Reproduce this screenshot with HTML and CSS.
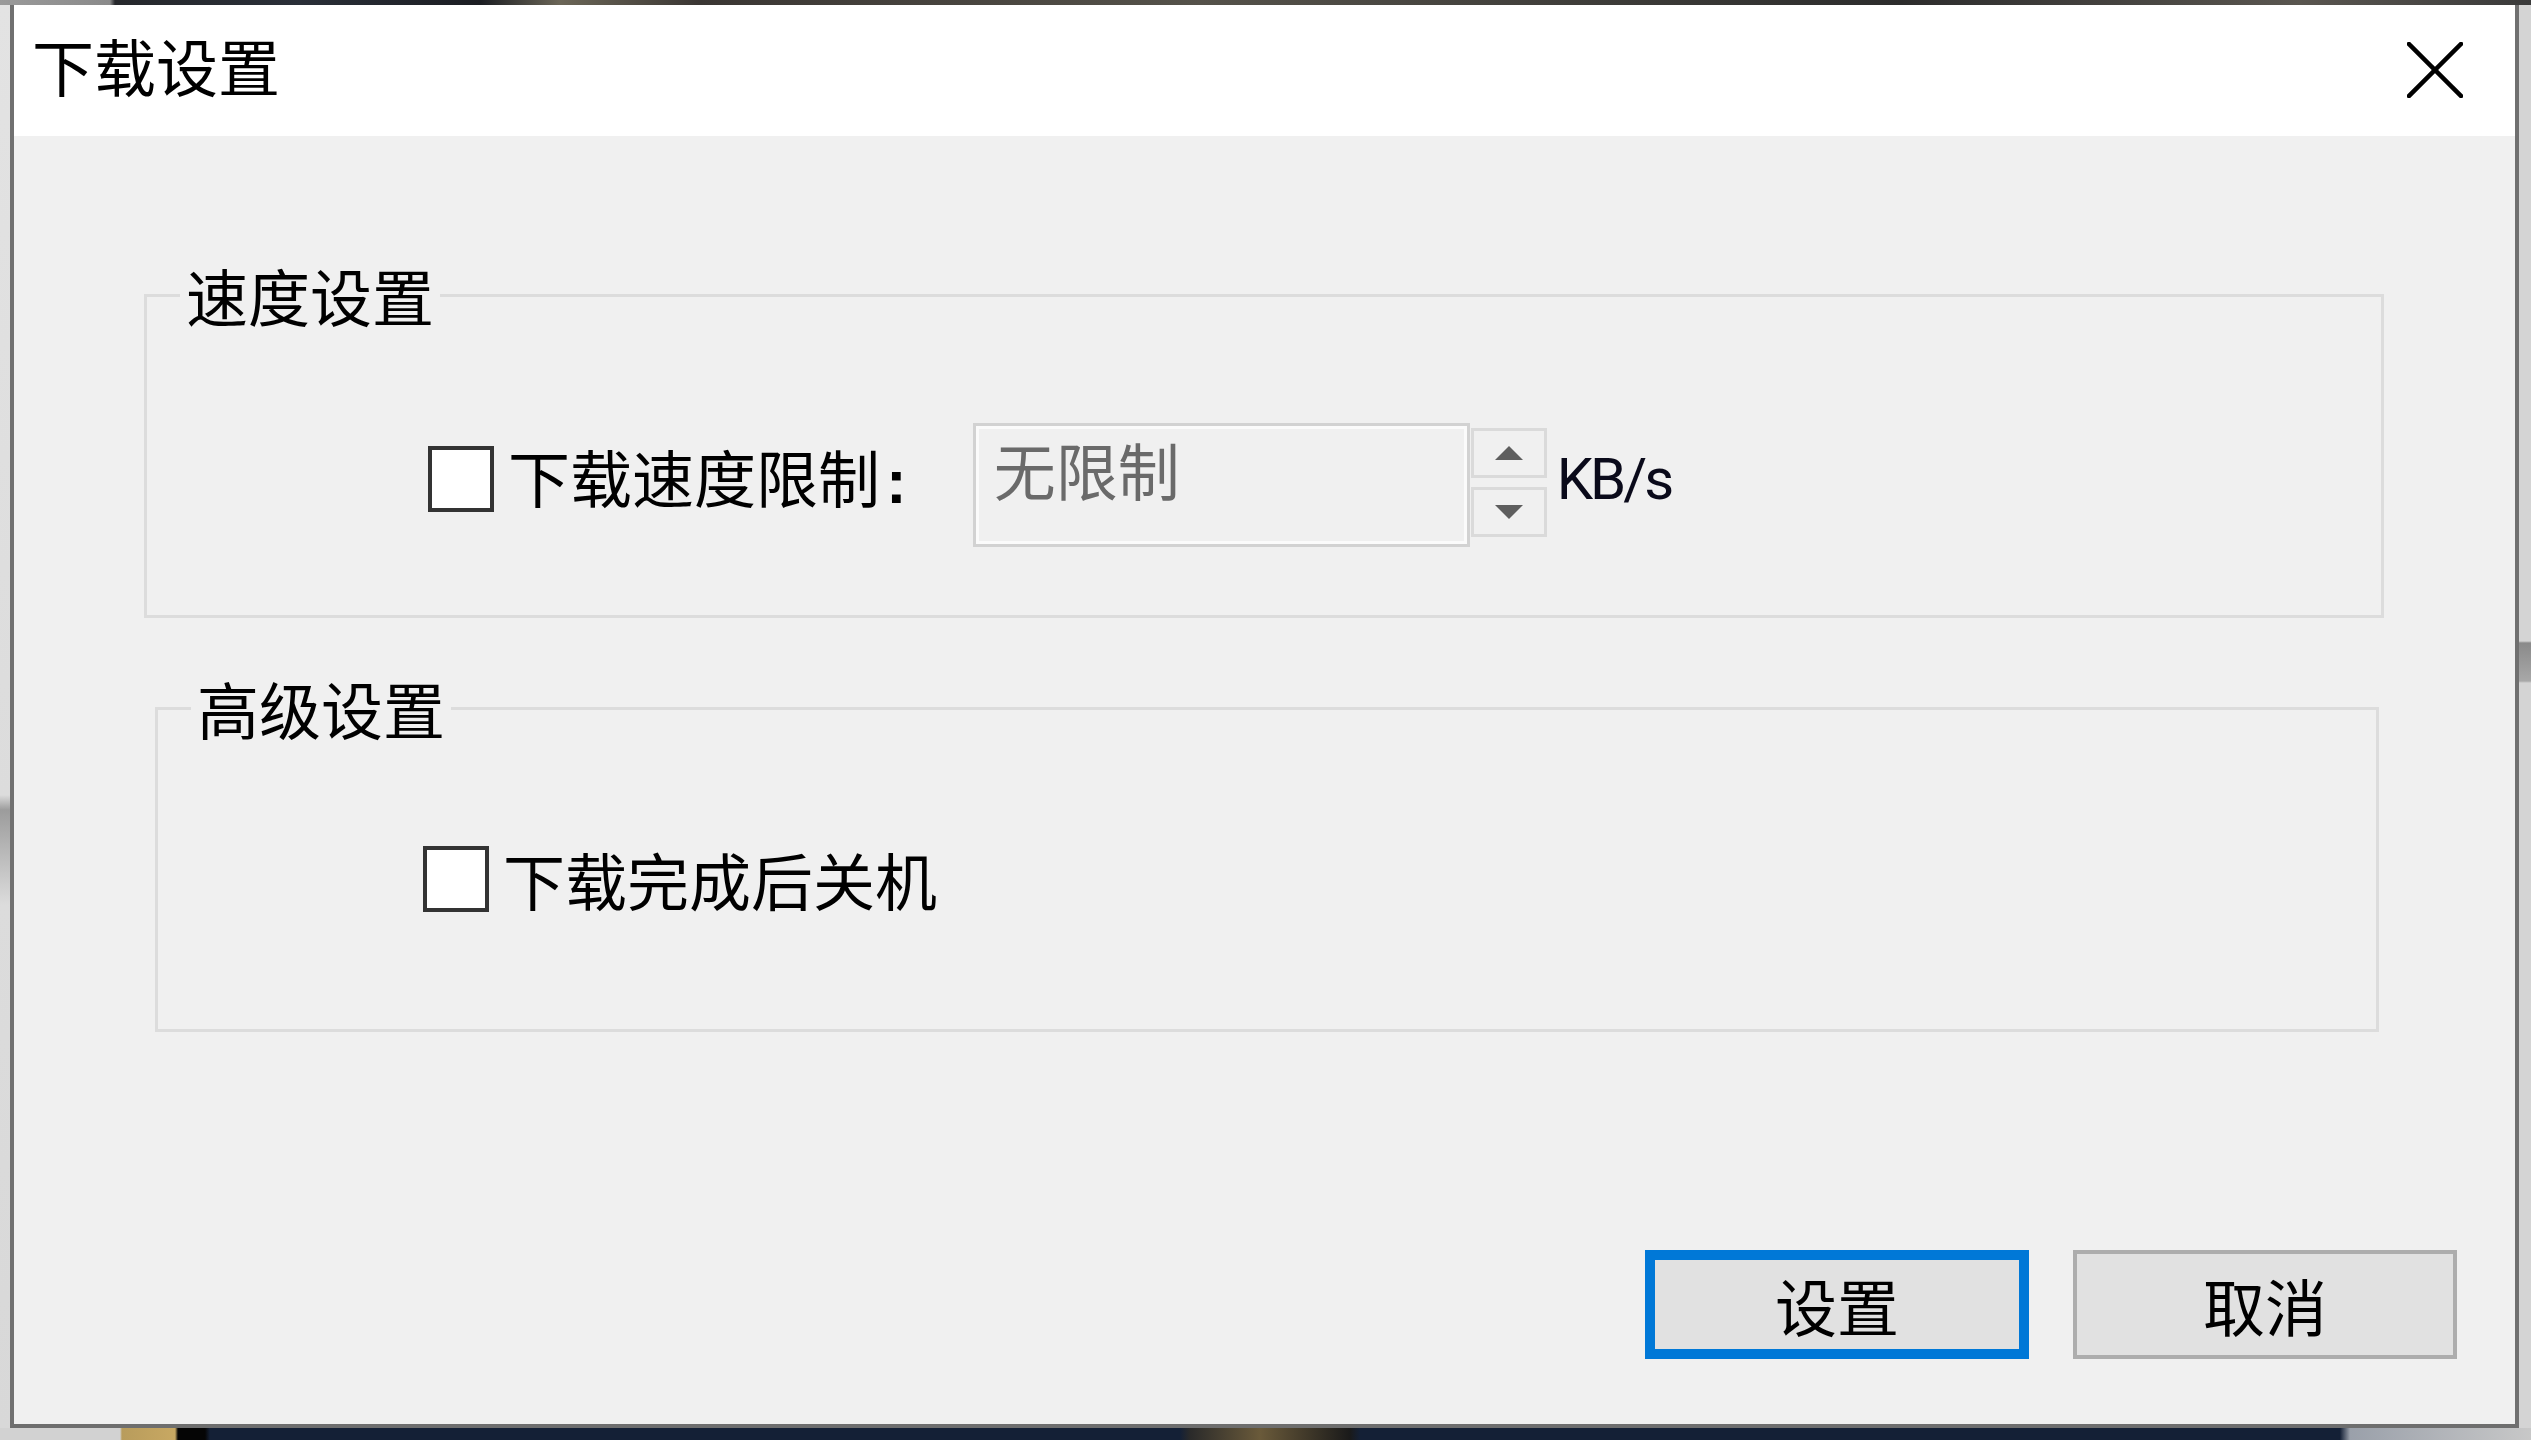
FILE: index.html
```html
<!DOCTYPE html>
<html lang="zh-CN">
<head>
<meta charset="utf-8">
<title>下载设置</title>
<link rel="stylesheet" href="styles.css">
</head>
<body>
<div class="screen">
  <div class="strip-top"></div>
  <div class="strip-left"></div>
  <div class="window">
    <div class="titlebar">
      <span class="title">下载设置</span>
      <svg class="close" width="56" height="56" viewBox="0 0 56 56" aria-hidden="true">
        <line x1="2" y1="2" x2="54" y2="54" />
        <line x1="54" y1="2" x2="2" y2="54" />
      </svg>
    </div>
    <div class="body">
      <fieldset class="group group-speed">
        <legend class="legend">速度设置</legend>
        <div class="row row-speed">
          <span class="checkbox lift"></span>
          <span class="label lift">下载速度限制<span class="colon">:</span></span>
          <div class="input">无限制</div>
          <div class="spinner">
            <div class="spin"><span class="tri-up"></span></div>
            <div class="spin"><span class="tri-down"></span></div>
          </div>
          <span class="unit">KB/s</span>
        </div>
      </fieldset>
      <fieldset class="group group-adv">
        <legend class="legend">高级设置</legend>
        <div class="row row-adv">
          <span class="checkbox"></span>
          <span class="label">下载完成后关机</span>
        </div>
      </fieldset>
      <div class="buttons">
        <button class="btn btn-primary">设置</button>
        <button class="btn">取消</button>
      </div>
    </div>
  </div>
  <div class="strip-right"></div>
  <div class="strip-bottom"></div>
</div>
</body>
</html>
```

FILE: styles.css
```css
* { box-sizing: border-box; }
html, body { margin: 0; padding: 0; }
body {
  width: 2531px;
  height: 1440px;
  overflow: hidden;
  font-family: "Noto Sans CJK SC", "Noto Sans", sans-serif;
  color: #000;
}
.screen {
  display: grid;
  grid-template-columns: 10px 1fr 12px;
  grid-template-rows: 5px 1fr 12px;
  width: 2531px;
  height: 1440px;
}
.strip-top {
  grid-column: 1 / -1;
  background: linear-gradient(to right, #9a9a9a 0, #8a8a8a 110px, #26282c 115px, #2a2f38 300px, #1b1d22 480px, #6b6657 560px, #3a3633 700px, #55524a 1200px, #2c2c2c 1900px, #5a5650 2300px, #3a3a3a 2531px);
}
.strip-left {
  background: linear-gradient(to bottom, #e3e3e3 0, #dcdcdc 790px, #9c9c9c 805px, #dcdcdc 900px, #d8d8d8 1423px);
}
.strip-right {
  background: linear-gradient(to bottom, #d4d4d4 0, #d4d4d4 636px, #8a8a8a 638px, #a8a8a8 676px, #d4d4d4 678px, #d4d4d4 1423px);
}
.strip-bottom {
  grid-column: 1 / -1;
  background: linear-gradient(to right, #d2d2d2 0, #d2d2d2 120px, #b89c5c 122px, #c8a862 175px, #050505 178px, #050505 205px, #142036 210px, #142036 1180px, #2a2a2a 1190px, #6a5a3a 1260px, #1a1a1a 1350px, #142036 1360px, #142036 2340px, #9aa0aa 2350px, #c8c8c8 2531px);
}

.window {
  display: flex;
  flex-direction: column;
  border-left: 4px solid #707070;
  border-right: 4px solid #707070;
  border-bottom: 4px solid #6e6e6e;
  background: #f0f0f0;
}
.titlebar {
  height: 131px;
  flex: none;
  background: #fff;
  display: flex;
  align-items: center;
  justify-content: space-between;
  padding: 0 52px 0 18px;
}
.title {
  font-size: 62px;
  line-height: 62px;
  margin-top: -12px;
}
.close line {
  stroke: #000;
  stroke-width: 4.5;
  stroke-linecap: square;
}
.close { margin-top: -2px; }

.body {
  flex: 1;
  display: flex;
  flex-direction: column;
  padding-top: 128px;
  padding-bottom: 65px;
  background: #f0f0f0;
}
.group {
  margin: 0;
  padding: 0;
  border: 3px solid #dcdcdc;
  min-width: 0;
}
.group-speed {
  margin-left: 130px;
  width: 2240px;
  height: 354px;
}
.group-adv {
  margin-top: 59px;
  margin-left: 141px;
  width: 2224px;
  height: 355px;
}
.legend {
  margin-left: 33px;
  padding: 0 6px;
  font-size: 62px;
  line-height: 62px;
}
.row {
  display: flex;
  align-items: center;
}
.row-speed {
  margin-top: 97px;
  margin-left: 281px;
  height: 124px;
}
.row-adv {
  margin-top: 107px;
  margin-left: 265px;
  height: 66px;
}
.lift { margin-bottom: 12px; }
.checkbox {
  width: 66px;
  height: 66px;
  border: 4px solid #333;
  background: #fff;
  flex: none;
}
.label {
  font-size: 62px;
  line-height: 62px;
  margin-left: 14px;
  white-space: nowrap;
}
.colon {
  font-family: "Liberation Sans", sans-serif;
  font-weight: bold;
  margin-left: 6px;
}
.input {
  margin-left: 66px;
  width: 497px;
  height: 124px;
  border: 3px solid #d2d2d2;
  box-shadow: inset 0 0 0 3px #fbfbfb;
  background: #f0f0f0;
  color: #6a6a6a;
  font-size: 62px;
  line-height: 62px;
  padding: 12px 0 0 18px;
  white-space: nowrap;
}
.spinner {
  margin-left: 1px;
  display: flex;
  flex-direction: column;
  gap: 9px;
  align-self: flex-start;
  margin-top: 5px;
}
.spin {
  width: 76px;
  height: 50px;
  border: 3px solid #dadada;
  background: #f0f0f0;
  display: flex;
  align-items: center;
  justify-content: center;
}
.tri-up {
  width: 0;
  height: 0;
  border-left: 14px solid transparent;
  border-right: 14px solid transparent;
  border-bottom: 14px solid #5e5e5e;
}
.tri-down {
  width: 0;
  height: 0;
  border-left: 14px solid transparent;
  border-right: 14px solid transparent;
  border-top: 14px solid #5e5e5e;
}
.unit {
  font-family: "Roboto", "Liberation Sans", sans-serif;
  font-size: 58px;
  letter-spacing: -3px;
  line-height: 58px;
  margin-left: 10px;
  margin-bottom: 12px;
  color: #0a0a1a;
}
.buttons {
  margin-top: auto;
  display: flex;
  justify-content: flex-end;
  gap: 44px;
  padding-right: 58px;
}
.btn {
  width: 384px;
  height: 109px;
  margin: 0;
  padding: 0;
  border: 4px solid #adadad;
  background: #e1e1e1;
  font-family: "Noto Sans CJK SC", sans-serif;
  font-size: 62px;
  line-height: 62px;
  color: #000;
}
.btn-primary {
  border: 10px solid #0078d7;
}
```
